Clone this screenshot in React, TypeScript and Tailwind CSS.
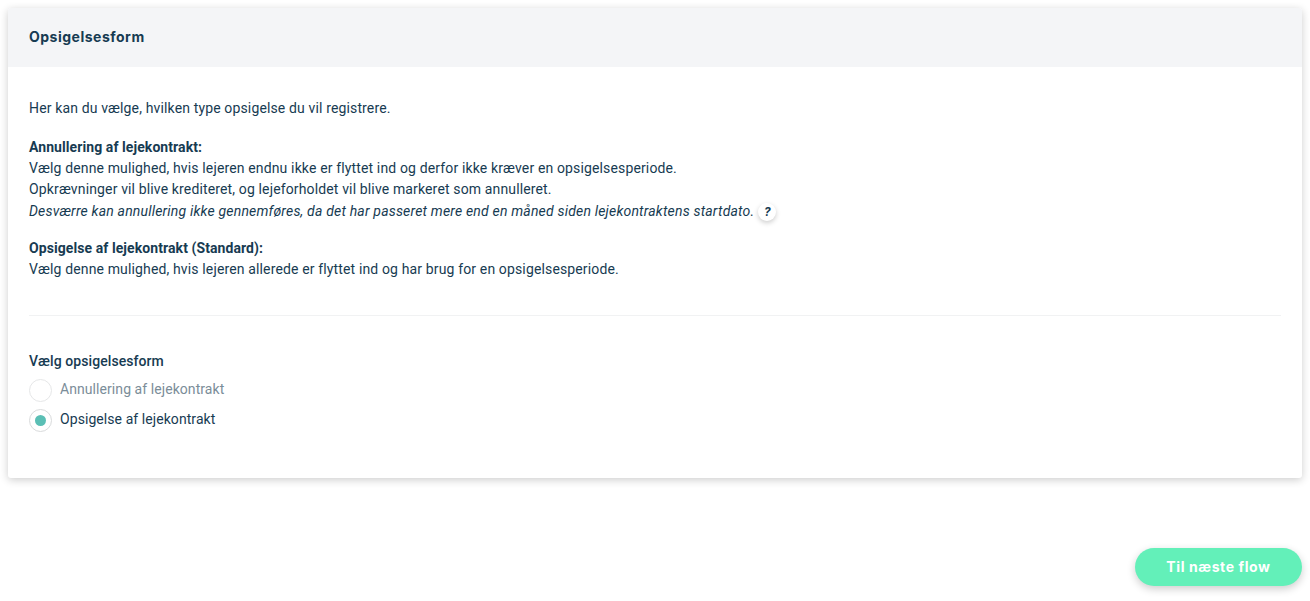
export default function App() {
    return (
        <div className="w-full h-[601px] bg-white flex flex-col px-2 pt-2 text-[#173b52] font-['Roboto',sans-serif] text-[14px] tracking-[0.14px] antialiased overflow-hidden">
            {/* Card */}
            <section className="h-[470px] bg-white rounded-[3px] shadow-[0_2px_8px_rgba(0,0,0,0.2)] flex flex-col">
                <header className="h-[59px] shrink-0 bg-[#f4f5f7] rounded-t-[3px] flex items-center px-[21px] pb-[2px]">
                    <h2 className="font-['Inter',sans-serif] font-bold text-[14px] tracking-[0.5px]">Opsigelsesform</h2>
                </header>
                <div className="px-[21px] pt-[31px] flex flex-col leading-[21px]">
                    <p>Her kan du vælge, hvilken type opsigelse du vil registrere.</p>
                    <p className="mt-[18px] font-bold tracking-[0.08px]">Annullering af lejekontrakt:</p>
                    <p>Vælg denne mulighed, hvis lejeren endnu ikke er flyttet ind og derfor ikke kræver en opsigelsesperiode.</p>
                    <p>Opkrævninger vil blive krediteret, og lejeforholdet vil blive markeret som annulleret.</p>
                    <p className="italic flex items-center h-[23px] tracking-[0.19px]">
                        Desværre kan annullering ikke gennemføres, da det har passeret mere end en måned siden lejekontraktens startdato.
                        <span className="ml-[4px] w-[18px] h-[18px] rounded-full bg-white shadow-[0_2px_5px_rgba(0,0,0,0.2)] flex items-center justify-center text-[13px] font-bold tracking-normal">?</span>
                    </p>
                    <p className="mt-[15px] font-bold tracking-[0.08px]">Opsigelse af lejekontrakt (Standard):</p>
                    <p>Vælg denne mulighed, hvis lejeren allerede er flyttet ind og har brug for en opsigelsesperiode.</p>
                    <hr className="mt-[35px] border-t border-[#f1f2f3]" />
                    <p className="mt-[35px] font-medium tracking-[0.08px]">Vælg opsigelsesform</p>
                    <div className="mt-[6px] flex flex-col gap-[7px] tracking-[0.07px]">
                        <label className="flex items-center gap-[8px] h-[23px] text-[#7b8d99]">
                            <span className="mt-[2px] w-[23px] h-[23px] rounded-full border border-[#e6e7e8] bg-white" />
                            Annullering af lejekontrakt
                        </label>
                        <label className="flex items-center gap-[8px] h-[23px]">
                            <span className="mt-[2px] w-[23px] h-[23px] rounded-full border border-[#d9dbdc] bg-white flex items-center justify-center">
                                <span className="w-[11px] h-[11px] rounded-full bg-[#5bbfb5]" />
                            </span>
                            Opsigelse af lejekontrakt
                        </label>
                    </div>
                </div>
            </section>
            {/* Footer */}
            <div className="mt-[70px] flex justify-end">
                <button className="w-[167px] h-[38px] pb-[2px] rounded-full bg-[#63f0b9] text-white font-['Inter',sans-serif] font-bold text-[14px] tracking-[0.6px] shadow-[0_3px_8px_rgba(0,0,0,0.2)]">
                    Til næste flow
                </button>
            </div>
        </div>
    );
}
